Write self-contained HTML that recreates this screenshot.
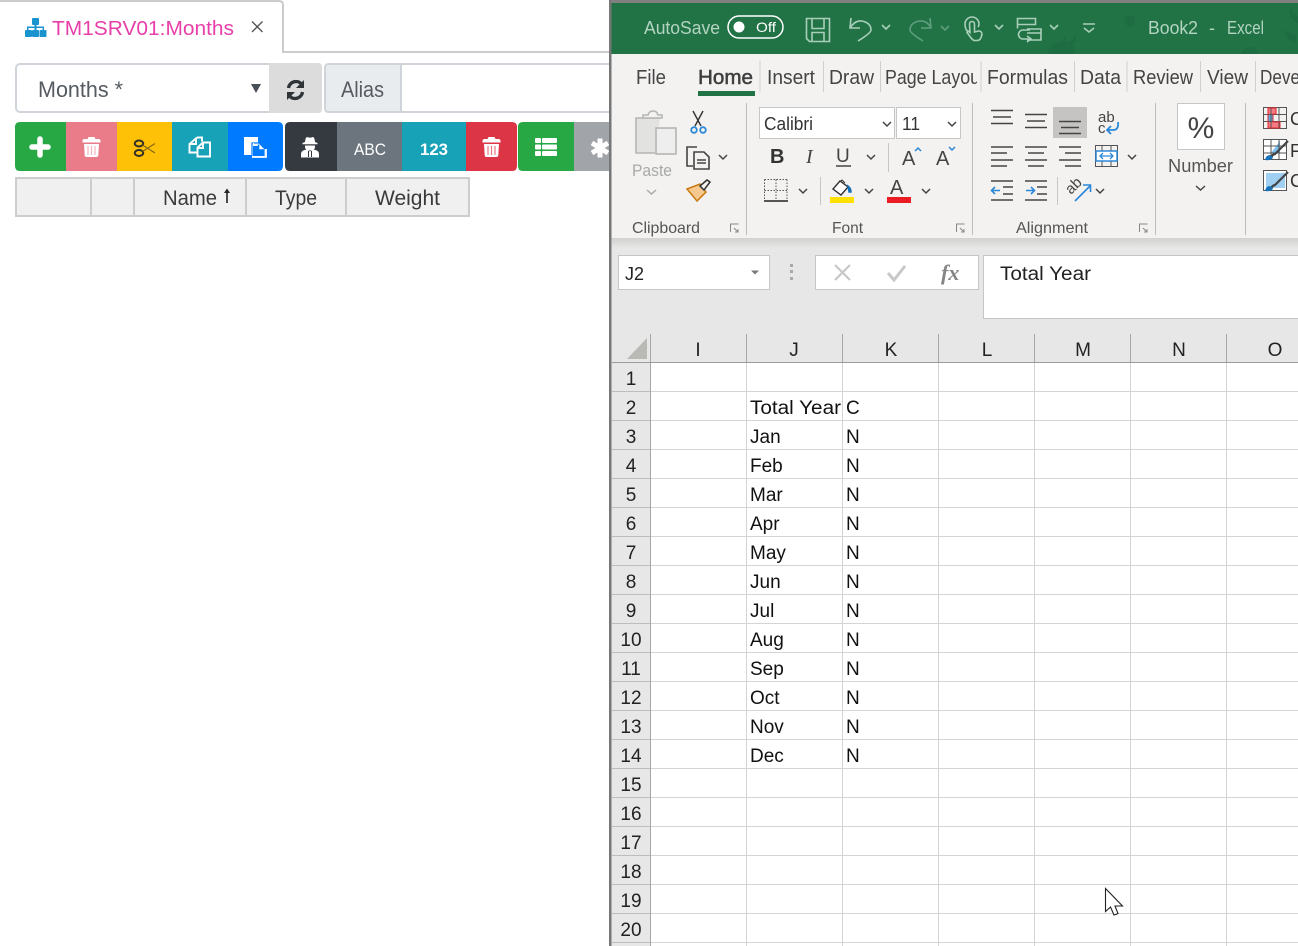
<!DOCTYPE html>
<html lang="en"><head><meta charset="utf-8"><title>TM1SRV01:Months</title>
<style>
html,body{margin:0;padding:0;background:#fff;width:1298px;height:946px;overflow:hidden}
svg{display:block;position:absolute;left:0;top:0}
text{font-family:"Liberation Sans",sans-serif}
.t{fill:#444;font-size:20px}
.c{fill:#111;font-size:19px}
.r{fill:#222;font-size:19px;text-anchor:middle}
.h{fill:#222;font-size:19px;text-anchor:middle}
.ic{fill:none;stroke:#444;stroke-width:1.6}
.ch{fill:none;stroke:#444;stroke-width:1.5}
.al{stroke:#444;stroke-width:1.6}
.tb{fill:none;stroke:#a9cfba;stroke-width:1.6}
</style></head><body>
<svg width="1298" height="946" viewBox="0 0 1298 946" xmlns="http://www.w3.org/2000/svg">
<!-- left web app -->
<rect width="610" height="946" fill="#fff"/>
<path d="M0 1H279Q283 1 283 5V52H610" fill="none" stroke="#ccc" stroke-width="2"/>
<g fill="#1a94cf"><rect x="32" y="18" width="7" height="7" rx="1"/><rect x="25" y="30" width="7" height="7" rx="1"/><rect x="32" y="30" width="7" height="7" rx="1"/><rect x="39.500" y="30" width="7" height="7" rx="1"/><path d="M34.500 24h2v2.500h7.500v4h-1.500v-2.500h-6v2.500h-2v-2.500h-6v2.500h-1.500v-4h7.500z"/></g>
<text x="52" y="35" font-size="20" fill="#e83fa8" textLength="182" lengthAdjust="spacingAndGlyphs">TM1SRV01:Months</text>
<path d="M252 21.500l10.500 10.500M262.500 21.500L252 32" stroke="#555" stroke-width="1.400"/>

<rect x="16" y="64" width="305" height="48" rx="4" fill="#fff" stroke="#ced4da" stroke-width="2"/>
<path d="M269 63h49q4 0 4 4v42q0 4-4 4h-49z" fill="#dcdcdc"/>
<text x="38" y="97" font-size="22" fill="#555b61" textLength="85" lengthAdjust="spacingAndGlyphs">Months *</text>
<path d="M251 84h10l-5 9z" fill="#495057"/>
<g fill="none" stroke="#2f3438" stroke-width="3.400"><path d="M288.500 88a7.500 7.500 0 0 1 13-4"/><path d="M302.500 92a7.500 7.500 0 0 1-13 4"/></g>
<path d="M304 80v8h-8zM287 100v-8h8z" fill="#2f3438"/>
<path d="M610 64H329q-4 0-4 4v40q0 4 4 4H610" fill="#fff" stroke="#ced4da" stroke-width="2"/>
<path d="M400 65H329q-3 0-3 3v40q0 3 3 3h71z" fill="#e9ecef"/>
<rect x="400" y="64" width="2" height="48" fill="#ced4da"/>
<text x="341" y="97" font-size="22" fill="#555b61" textLength="43" lengthAdjust="spacingAndGlyphs">Alias</text>

<!-- button rows -->
<path d="M20 122H66V171H20q-5 0-5-5V127q0-5 5-5z" fill="#28a745"/>
<rect x="66" y="122" width="51" height="49" fill="#e97c88"/>
<rect x="117" y="122" width="55" height="49" fill="#ffc107"/>
<rect x="172" y="122" width="56" height="49" fill="#17a2b8"/>
<path d="M228 122H278q5 0 5 5V166q0 5-5 5H228z" fill="#007bff"/>
<path d="M290 122H337V171H290q-5 0-5-5V127q0-5 5-5z" fill="#343a40"/>
<rect x="337" y="122" width="65" height="49" fill="#6c757d"/>
<rect x="402" y="122" width="64" height="49" fill="#17a2b8"/>
<path d="M466 122H512q5 0 5 5V166q0 5-5 5H466z" fill="#dc3545"/>
<path d="M523 122H574V171H523q-5 0-5-5V127q0-5 5-5z" fill="#28a745"/>
<rect x="574" y="122" width="36" height="49" fill="#a1a5aa"/>

<path d="M40 139v16M32 147h16" stroke="#fff" stroke-width="5.500" stroke-linecap="round"/>
<g><path d="M82.500 141q0-2 2-2h3l1-2h6l1 2h3q2 0 2 2v1.500h-18z" fill="#fff"/><path d="M84 144h15l-.7 11q0 2-2 2h-9.600q-2 0-2-2z" fill="#fff"/><path d="M88 146v9M91.500 146v9M95 146v9" stroke="#f2b5bd" stroke-width="1.200"/></g>
<g fill="none" stroke="#33302a" stroke-width="2"><ellipse cx="139" cy="143.500" rx="4.200" ry="3"/><ellipse cx="139" cy="153" rx="4.200" ry="3"/></g>
<path d="M142.500 145l12.500 8M142.500 151.500l12.500-8" stroke="#8a6a14" stroke-width="1.300"/>
<g fill="none" stroke="#fff" stroke-width="1.900"><path d="M197 137.500h5v4M197 137.500l-7.500 6.500v8.500h7"/><path d="M196 138v6h-6"/><path d="M203 142.500h7v14h-12.500v-9z"/><path d="M203 143v5h-5.500"/></g>
<rect x="244" y="137" width="14" height="18" fill="#fff"/>
<path d="M252 143h7l6 6v8h-13z" fill="#fff" stroke="#007bff" stroke-width="1.200"/>
<path d="M253 143v7h1v-7z" fill="#fff"/><path d="M258.500 144.500v5.500h5.500" fill="none" stroke="#007bff" stroke-width="1.600"/>
<path d="M253 146h6v4h5v6h-11z" fill="#007bff"/><path d="M252 157h14v-8" fill="none" stroke="#fff" stroke-width="1.800"/>
<path d="M305 142q.5-5 2-5 3 1.200 6 0 1.500 0 2 5l2.500 1v1.200h-15V143z" fill="#fff"/><path d="M305 145.500h10v1.500q0 3.500-5 3.500t-5-3.500z" fill="#fff"/><path d="M304.500 150l2.500-.5 3 2 3-2 2.500.5q3.500 1 3.500 4v3.500H301V154q0-3 3.500-4z" fill="#fff"/><path d="M308.500 151v6M311.500 151v6" stroke="#343a40" stroke-width="1"/>
<text x="354" y="155" font-size="17" fill="#fff" textLength="32" lengthAdjust="spacingAndGlyphs">ABC</text>
<text x="420" y="155" font-size="17" font-weight="bold" fill="#fff" textLength="28" lengthAdjust="spacingAndGlyphs">123</text>
<g><path d="M482.500 141q0-2 2-2h3l1-2h6l1 2h3q2 0 2 2v1.500h-18z" fill="#fff"/><path d="M484 144h15l-.7 11q0 2-2 2h-9.600q-2 0-2-2z" fill="#fff"/><path d="M488 146v9M491.500 146v9M495 146v9" stroke="#ea7782" stroke-width="1.200"/></g>
<g fill="#fff"><rect x="535" y="138" width="6" height="5" rx="1"/><rect x="542" y="138" width="15" height="5" rx="1"/><rect x="535" y="144.500" width="6" height="5" rx="1"/><rect x="542" y="144.500" width="15" height="5" rx="1"/><rect x="535" y="151" width="6" height="5" rx="1"/><rect x="542" y="151" width="15" height="5" rx="1"/></g>
<path d="M600 138.500v19M592 143l16 10M608 143l-16 10" stroke="#fff" stroke-width="5"/>

<!-- table header -->
<rect x="16" y="178" width="453" height="38" fill="#f0f0f0" stroke="#cdcdcd" stroke-width="2"/>
<path d="M91 178v38M134 178v38M246 178v38M346 178v38" stroke="#cdcdcd" stroke-width="2"/>
<g font-size="21" fill="#3a3a3a"><text x="163" y="205" textLength="54" lengthAdjust="spacingAndGlyphs">Name</text><text x="275" y="205" textLength="42" lengthAdjust="spacingAndGlyphs">Type</text><text x="375" y="205" textLength="65" lengthAdjust="spacingAndGlyphs">Weight</text></g>
<path d="M227 203v-12" stroke="#222" stroke-width="1.600"/><path d="M224 193l3-4.500 3 4.500z" fill="#222"/>

<!-- Excel window -->
<rect x="610" y="0" width="688" height="946" fill="#fff"/>
<rect x="610" y="3" width="688" height="51" fill="#217346"/>
<clipPath id="tbar"><rect x="610" y="3" width="688" height="51"/></clipPath>
<g fill="#1e6c41" clip-path="url(#tbar)"><circle cx="1130" cy="21" r="5.500"/><path d="M1049 48q7-7 13-5 1-5 3-6l2 5q6 0 8-6 3 5-3 9 5 3 2 9H1048z"/><circle cx="1250" cy="56" r="9"/><path d="M1291 5q1 8 4 10l3 1v7q-6-2-8-8-1-6 1-10zM1284 30l12 6v8l-10-7z"/></g>
<linearGradient id="sh" x1="0" y1="0" x2="0" y2="1"><stop offset="0" stop-color="#d2d2d1"/><stop offset="1" stop-color="#e6e7e6"/></linearGradient>
<rect x="610" y="54" width="688" height="184" fill="#f3f2f1"/>
<rect x="610" y="238" width="688" height="10" fill="url(#sh)"/>
<rect x="610" y="248" width="688" height="114" fill="#e6e7e6"/>
<rect x="610" y="362" width="40" height="584" fill="#e6e7e6"/>
<rect x="610" y="0" width="688" height="3" fill="#808080"/>
<rect x="609" y="0" width="2.500" height="946" fill="#777"/>

<g font-size="18" fill="#b3d4c1"><text x="644" y="34" textLength="76" lengthAdjust="spacingAndGlyphs">AutoSave</text><text x="1148" y="34" textLength="50" lengthAdjust="spacingAndGlyphs">Book2</text><text x="1209" y="34">-</text><text x="1227" y="34" textLength="37" lengthAdjust="spacingAndGlyphs">Excel</text></g>
<rect x="728" y="16" width="55" height="22" rx="11" fill="#217346" stroke="#fff" stroke-width="1.500"/>
<circle cx="739" cy="27" r="5.500" fill="#fff"/>
<text x="756" y="32" font-size="14" fill="#fff" textLength="20" lengthAdjust="spacingAndGlyphs">Off</text>
<g class="tb">
<path d="M806.500 18.500h23v23h-20l-3-3z"/><path d="M812 18.500v10h12v-10M812 41.500v-9h12v9"/>
<path d="M851 18l-1 10h10M850 28q5-8 12-7 9 2 9 9 0 3-13 11" /><path d="M882 25l4 4 4-4"/>
<g stroke="#5f9e7d"><path d="M930 18l1 10h-10M931 28q-4-8-12-7-9 2-9 9 0 3 13 11"/><path d="M941 26l4 4 4-4"/></g>
<path d="M967 31q-2-3-2-7a7 7 0 0 1 14 0q0 2-1 3"/><path d="M969.500 24a2.500 2.500 0 0 1 5 0v8l4-1q3.500 0 3.500 3.500l-1 3q-1 3-4 3h-3q-2-1-4-4l-3-4 1-1.500 2 1.500z"/>
<path d="M995 25l4 4 4-4"/>
<path d="M1017.500 18.500h18v6h-18zM1017.500 24.500v4"/><path d="M1027 29h14v11h-14M1027 33h14"/><path d="M1030 30h-7a4.500 4.500 0 0 0 0 9h8M1027 36l4 3-4 3"/>
<path d="M1050 25l4 4 4-4"/>
<path d="M1083 24h12M1084 28l5 4 5-4"/>
</g>

<!-- ribbon tabs -->
<g class="t">
<text x="636" y="84" textLength="30" lengthAdjust="spacingAndGlyphs">File</text>
<text x="698" y="84" textLength="55" lengthAdjust="spacingAndGlyphs" stroke="#3e3e3e" stroke-width=".5" fill="#3e3e3e">Home</text>
<text x="767" y="84" textLength="48" lengthAdjust="spacingAndGlyphs">Insert</text>
<text x="829" y="84" textLength="45" lengthAdjust="spacingAndGlyphs">Draw</text>
<svg x="885" y="60" width="92" height="34" viewBox="885 60 92 34" overflow="hidden"><text class="t" x="885" y="84" textLength="100" lengthAdjust="spacingAndGlyphs">Page Layout</text></svg>
<text x="987" y="84" textLength="81" lengthAdjust="spacingAndGlyphs">Formulas</text>
<text x="1080" y="84" textLength="41" lengthAdjust="spacingAndGlyphs">Data</text>
<text x="1133" y="84" textLength="60" lengthAdjust="spacingAndGlyphs">Review</text>
<text x="1207" y="84" textLength="41" lengthAdjust="spacingAndGlyphs">View</text>
<text x="1260" y="84" textLength="40" lengthAdjust="spacingAndGlyphs">Deve</text>
</g>
<rect x="698" y="91" width="57" height="5" fill="#217346"/>
<path d="M760 61v31M823.500 61v31M880.500 61v31M981 61v31M1074.500 61v31M1127 61v31M1200.500 61v31M1255.500 61v31" stroke="#d0cfce"/>
<path d="M746.500 103v132M972.500 103v132M1155.500 103v132M1245.500 103v132" stroke="#bdbcbb"/>

<!-- clipboard -->
<g fill="none" stroke="#b5b5b5" stroke-width="1.600"><path d="M660 118h-24v35h19" fill="#e2e2e1"/><path d="M643 118v-3h5q1-4 5-4t5 4h4v3z" fill="#f3f2f1"/><rect x="656" y="128" width="20" height="26" fill="#eee"/></g>
<text x="632" y="176" font-size="17" fill="#a9a9a9" textLength="40" lengthAdjust="spacingAndGlyphs">Paste</text>
<path d="M647 190l4.500 4 4.500-4" fill="none" stroke="#aaa" stroke-width="1.500"/>
<path d="M693 111l8 15M703 111l-8 15" stroke="#333" stroke-width="1.400"/><g fill="none" stroke="#2b88d8" stroke-width="1.800"><circle cx="694" cy="130" r="2.800"/><circle cx="703" cy="130" r="2.800"/></g>
<g class="ic" stroke="#333"><path d="M697 147h-10v19h6"/><path d="M694 152h10l5 5v12h-15z"/><path d="M697 160h9M697 163h9"/></g>
<path class="ch" d="M719 155l4 4 4-4"/>
<path d="M687 189l13-5 6 8-9 9z" fill="#f5c98e" stroke="#c97a10" stroke-width="1.500"/><path d="M700 186l7-6 3 2-6 8z" fill="#f3f2f1" stroke="#333" stroke-width="1.500"/>

<!-- font group -->
<rect x="759.500" y="107.500" width="135" height="31" fill="#fff" stroke="#c6c6c6"/>
<rect x="896.500" y="107.500" width="64" height="31" fill="#fff" stroke="#c6c6c6"/>
<text x="764" y="130" font-size="18" fill="#333" textLength="49" lengthAdjust="spacingAndGlyphs">Calibri</text>
<text x="902" y="130" font-size="18" fill="#333" textLength="18" lengthAdjust="spacingAndGlyphs">11</text>
<path class="ch" d="M883 122l4 4 4-4M948 122l4 4 4-4"/>
<text x="770" y="163" font-size="20" font-weight="bold" fill="#333">B</text>
<text x="806" y="163" font-size="20" font-style="italic" fill="#444" style="font-family:'Liberation Serif',serif">I</text>
<text x="836" y="162" font-size="19" fill="#444">U</text><path d="M836 166h15" stroke="#444" stroke-width="1.500"/>
<path class="ch" d="M867 155l4 4 4-4"/>
<path d="M888.500 143v29" stroke="#c6c6c6"/>
<text x="902" y="165" font-size="20" fill="#444">A</text><path d="M915 151l3-3 3 3" fill="none" stroke="#2b88d8" stroke-width="1.500"/>
<text x="936" y="165" font-size="20" fill="#444">A</text><path d="M949 147l3 3 3-3" fill="none" stroke="#2b88d8" stroke-width="1.500"/>
<path d="M764.500 179.500h23M764.500 179.500v21M787 179.500v21M776 179.500v21M764.500 190.500h23" stroke="#555" stroke-dasharray="1.500 1.500" fill="none"/><path d="M764 201h24" stroke="#222" stroke-width="1.600"/>
<path class="ch" d="M799 189l4 4 4-4M865 189l4 4 4-4M922 189l4 4 4-4"/>
<path d="M820.500 177v28" stroke="#c6c6c6"/>
<path d="M840 181l-7 8 8 6 7-8z" fill="#fff" stroke="#333" stroke-width="1.400"/><path d="M848 186q3 2 3 6h-2z" fill="#1672b8" stroke="#1672b8" stroke-width="1.500"/><path d="M841 181l1-1 3 3" stroke="#333" fill="none"/>
<rect x="830" y="197" width="24" height="6" fill="#ffe000"/>
<text x="890" y="194" font-size="20" fill="#444">A</text>
<rect x="887" y="197" width="24" height="6" fill="#ea1c24"/>
<text x="632" y="233" font-size="16" fill="#555" textLength="68" lengthAdjust="spacingAndGlyphs">Clipboard</text>
<text x="832" y="233" font-size="16" fill="#555" textLength="31" lengthAdjust="spacingAndGlyphs">Font</text>
<text x="1016" y="233" font-size="16" fill="#555" textLength="72" lengthAdjust="spacingAndGlyphs">Alignment</text>
<g fill="none" stroke="#888"><path d="M730.500 232v-8h8M734 228l4 4M738 229v3h-3"/><path d="M956.500 232v-8h8M960 228l4 4M964 229v3h-3"/><path d="M1139.500 232v-8h8M1143 228l4 4M1147 229v3h-3"/></g>

<!-- alignment -->
<rect x="1053" y="107" width="34" height="31" fill="#c5c4c3"/>
<path class="al" d="M991 110.500h22M993 117h18M991 123.500h22M1025 114.500h22M1027 121h18M1025 127.500h22M1059 121.500h22M1061 127.500h18M1059 133.500h22"/>
<path class="al" d="M991 147h22M991 153h16M991 160h22M991 166h16M1025 147h22M1028 153h16M1025 160h22M1028 166h16M1059 147h22M1065 153h16M1059 160h22M1065 166h16"/>
<path class="al" d="M991 181h22M1003 187h10M1003 194h10M991 200h22M1025 181h22M1037 187h10M1037 194h10M1025 200h22"/>
<path d="M1000 190.500h-8M995 187l-3.500 3.500 3.500 3.500M1026 190.500h8M1031 187l3.500 3.500-3.500 3.500" fill="none" stroke="#2b88d8" stroke-width="1.600"/>
<text x="1098" y="122" font-size="15" fill="#444">ab</text><text x="1098" y="133" font-size="15" fill="#444">c</text>
<path d="M1118 122q1 8-5 8h-6M1111 126l-4 4 4 4" fill="none" stroke="#2b88d8" stroke-width="1.800"/>
<rect x="1095.500" y="145.500" width="22" height="21" fill="#f3f2f1" stroke="#555"/><rect x="1096" y="151" width="21" height="10" fill="#fff" stroke="#2b88d8" stroke-width="1.500"/><path d="M1102 145.500v5M1111 145.500v5M1102 161.500v5M1111 161.500v5" stroke="#555"/>
<path d="M1100 156h13M1103 153l-3 3 3 3M1110 153l3 3-3 3" fill="none" stroke="#2b88d8" stroke-width="1.300"/>
<path class="ch" d="M1128 155l4 4 4-4M1096 189l4 4 4-4"/>
<path d="M1057.500 177v28" stroke="#c6c6c6"/>
<text x="0" y="0" font-size="15" fill="#444" transform="translate(1071 195) rotate(-45)">ab</text>
<path d="M1075 201l15-15M1083 185h7.500v7" fill="none" stroke="#2b88d8" stroke-width="1.600"/>

<!-- number -->
<rect x="1177.500" y="103.500" width="47" height="46" fill="#fff" stroke="#c6c6c6"/>
<text x="1201" y="138" font-size="30" fill="#444" text-anchor="middle">%</text>
<text x="1168" y="172" font-size="18" fill="#555" textLength="65" lengthAdjust="spacingAndGlyphs">Number</text>
<path class="ch" d="M1196 186l4.500 4 4.500-4"/>

<!-- styles -->
<rect x="1268" y="108" width="8" height="6" fill="#f47b82"/><rect x="1268" y="122" width="12" height="6" fill="#f47b82"/><rect x="1268" y="114" width="5" height="8" fill="#5eaee0"/>
<g stroke="#555" fill="none"><rect x="1263.500" y="107.500" width="23" height="21"/><path d="M1271 107v22M1279 107v22M1263 114.500h24M1263 121.500h24"/></g>
<path d="M1268 108h8v6h-3v8h7v6h-12z" fill="none" stroke="#e0262e"/>
<rect x="1264" y="140" width="22" height="19" fill="#fff"/><path d="M1280 141v12h-9z" fill="#7cc0ef"/><g stroke="#555" fill="none"><rect x="1263.500" y="139.500" width="23" height="20"/><path d="M1271 139v21M1279 139v21M1263 146h24M1263 153h24"/></g><path d="M1288 141l-13 13q-4 1-4 5" stroke="#444" stroke-width="2.200" fill="none"/><path d="M1265 160q1-5 5-5l3 2q-1 4-8 3z" fill="#1672b8"/>
<g stroke="#555" fill="none"><rect x="1263.500" y="170.500" width="23" height="20" fill="#fff"/></g><rect x="1266" y="173" width="19" height="15" fill="#9fd0f2"/><path d="M1288 172l-13 13q-4 1-4 5" stroke="#444" stroke-width="2.200" fill="none"/><path d="M1265 191q1-5 5-5l3 2q-1 4-8 3z" fill="#1672b8"/>
<g font-size="18" fill="#333"><text x="1290" y="125">C</text><text x="1290" y="157">F</text><text x="1290" y="187">C</text></g>

<!-- formula bar -->
<rect x="618.500" y="255.500" width="151" height="34" fill="#fff" stroke="#c6c6c6"/>
<text x="625" y="280" font-size="18" fill="#222">J2</text>
<path d="M751 270.500h8l-4 4z" fill="#777"/>
<g fill="#aaa"><rect x="790" y="264" width="3" height="3"/><rect x="790" y="270" width="3" height="3"/><rect x="790" y="277" width="3" height="3"/></g>
<rect x="815.500" y="255.500" width="163" height="34" fill="#fff" stroke="#c6c6c6"/>
<path d="M835 265l15 15M850 265l-15 15" stroke="#c8c8c8" stroke-width="2.200"/>
<path d="M888 273l6 7 11-14" fill="none" stroke="#c8c8c8" stroke-width="3"/>
<text x="941" y="280" font-size="22" font-style="italic" font-weight="bold" fill="#858585" style="font-family:'Liberation Serif',serif">fx</text>
<rect x="983.500" y="255.500" width="320" height="63" fill="#fff" stroke="#c6c6c6"/>
<text x="1000" y="280" font-size="19" fill="#222" textLength="91" lengthAdjust="spacingAndGlyphs">Total Year</text>

<!-- grid -->
<path d="M651 391.500H1298M651 420.500H1298M651 449.500H1298M651 478.500H1298M651 507.500H1298M651 536.500H1298M651 565.500H1298M651 594.500H1298M651 623.500H1298M651 652.500H1298M651 681.500H1298M651 710.500H1298M651 739.500H1298M651 768.500H1298M651 797.500H1298M651 826.500H1298M651 855.500H1298M651 884.500H1298M651 913.500H1298M651 942.500H1298M746.500 362V946M842.500 362V946M938.500 362V946M1034.500 362V946M1130.500 362V946M1226.500 362V946" stroke="#d4d4d4"/>
<path d="M612 391.500H650M612 420.500H650M612 449.500H650M612 478.500H650M612 507.500H650M612 536.500H650M612 565.500H650M612 594.500H650M612 623.500H650M612 652.500H650M612 681.500H650M612 710.500H650M612 739.500H650M612 768.500H650M612 797.500H650M612 826.500H650M612 855.500H650M612 884.500H650M612 913.500H650M612 942.500H650" stroke="#bdbdbb"/>
<path d="M650.500 334V946M746.500 334v28M842.500 334v28M938.500 334v28M1034.500 334v28M1130.500 334v28M1226.500 334v28" stroke="#a6a6a6"/>
<path d="M612 362.500H1298" stroke="#9b9b9b"/>
<path d="M627 359l20-21v21z" fill="#b9b9b6"/>
<g><text class="h" x="698" y="356">I</text><text class="h" x="794" y="356">J</text><text class="h" x="891" y="356">K</text><text class="h" x="987" y="356">L</text><text class="h" x="1083" y="356">M</text><text class="h" x="1179" y="356">N</text><text class="h" x="1275" y="356">O</text></g>
<g>
<text class="r" x="631" y="385">1</text><text class="r" x="631" y="414">2</text><text class="r" x="631" y="443">3</text><text class="r" x="631" y="472">4</text><text class="r" x="631" y="501">5</text><text class="r" x="631" y="530">6</text><text class="r" x="631" y="559">7</text><text class="r" x="631" y="588">8</text><text class="r" x="631" y="617">9</text><text class="r" x="631" y="646">10</text><text class="r" x="631" y="675">11</text><text class="r" x="631" y="704">12</text><text class="r" x="631" y="733">13</text><text class="r" x="631" y="762">14</text><text class="r" x="631" y="791">15</text><text class="r" x="631" y="820">16</text><text class="r" x="631" y="849">17</text><text class="r" x="631" y="878">18</text><text class="r" x="631" y="907">19</text><text class="r" x="631" y="936">20</text>
</g>
<g>
<text class="c" x="750" y="414" textLength="91" lengthAdjust="spacingAndGlyphs">Total Year</text><text class="c" x="846" y="414">C</text>
<text class="c" x="750" y="443">Jan</text><text class="c" x="846" y="443">N</text>
<text class="c" x="750" y="472">Feb</text><text class="c" x="846" y="472">N</text>
<text class="c" x="750" y="501">Mar</text><text class="c" x="846" y="501">N</text>
<text class="c" x="750" y="530">Apr</text><text class="c" x="846" y="530">N</text>
<text class="c" x="750" y="559">May</text><text class="c" x="846" y="559">N</text>
<text class="c" x="750" y="588">Jun</text><text class="c" x="846" y="588">N</text>
<text class="c" x="750" y="617">Jul</text><text class="c" x="846" y="617">N</text>
<text class="c" x="750" y="646">Aug</text><text class="c" x="846" y="646">N</text>
<text class="c" x="750" y="675">Sep</text><text class="c" x="846" y="675">N</text>
<text class="c" x="750" y="704">Oct</text><text class="c" x="846" y="704">N</text>
<text class="c" x="750" y="733">Nov</text><text class="c" x="846" y="733">N</text>
<text class="c" x="750" y="762">Dec</text><text class="c" x="846" y="762">N</text>
</g>
<!-- cursor -->
<path d="M1105.500 888.500V911.500L1110.500 907L1114 915L1118 913.500L1115 906H1122.500z" fill="#fff" stroke="#222" stroke-width="1.100"/>
</svg>
</body></html>
